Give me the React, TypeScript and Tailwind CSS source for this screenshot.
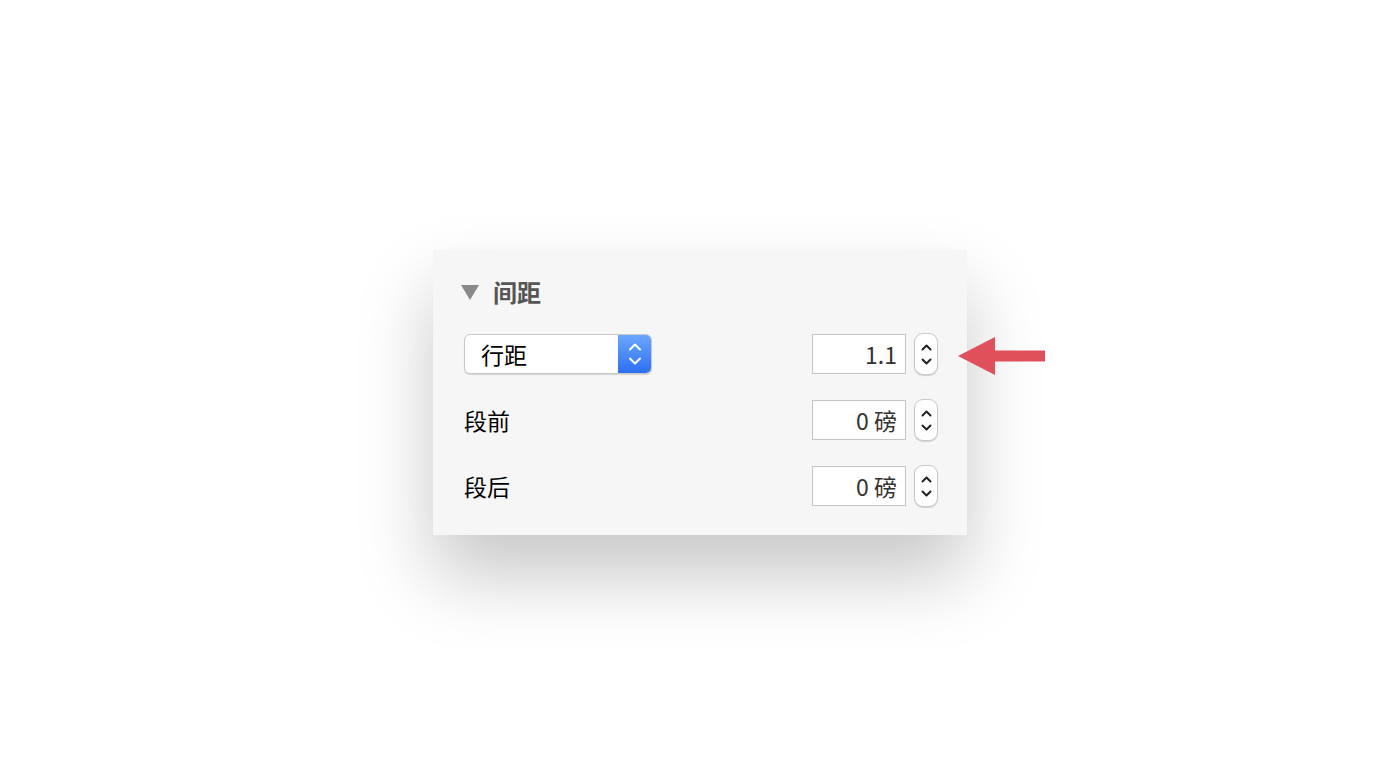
import React from "react";

const font = { fontFamily: '"Noto Sans CJK SC", "Noto Sans", sans-serif' };

function Stepper() {
  return (
    <div className="w-[24px] h-[42px] rounded-[9px] bg-white border border-[#c8c8c8] shadow-[0_1px_1px_rgba(0,0,0,0.15)] flex flex-col items-center justify-center gap-[7px]">
      <svg width="11" height="7" viewBox="0 0 11 7" fill="none" stroke="#222" strokeWidth="2" strokeLinecap="round" strokeLinejoin="round">
        <path d="M1.5 5.5 L5.5 1.5 L9.5 5.5" />
      </svg>
      <svg width="11" height="7" viewBox="0 0 11 7" fill="none" stroke="#222" strokeWidth="2" strokeLinecap="round" strokeLinejoin="round">
        <path d="M1.5 1.5 L5.5 5.5 L9.5 1.5" />
      </svg>
    </div>
  );
}

function NumberField({ value }: { value: string }) {
  return (
    <div className="flex items-center gap-[8px]">
      <div className="w-[94px] h-[40px] bg-white border border-[#c4c4c4] flex items-center justify-end pr-[8px] text-[23px] text-[#333] leading-none">
        {value}
      </div>
      <Stepper />
    </div>
  );
}

export default function App() {
  return (
    <div className="w-[1400px] h-[784px] bg-white flex items-start justify-center pt-[250px]" style={font}>
      <div className="relative">
        <div className="w-[534px] h-[285px] bg-[#f6f6f6] shadow-[0_40px_70px_rgba(0,0,0,0.22)] pl-[31px] pr-[29px] pt-[28px]">
          <div className="flex items-center h-[28px]">
            <svg width="18" height="15" viewBox="0 0 18 15" className="ml-[-3px]">
              <path d="M0 0 H18 L9 15 Z" fill="#8a8a8a" />
            </svg>
            <span className="ml-[14px] text-[24px] font-bold text-[#555] leading-none">间距</span>
          </div>

          <div className="flex items-center justify-between mt-[27px]">
            <div className="w-[188px] h-[40px] rounded-[6px] bg-white border border-[#c8c8c8] shadow-[0_1px_1px_rgba(0,0,0,0.15)] flex overflow-hidden">
              <div className="flex-1 flex items-center pl-[16px] text-[23px] text-black leading-none">行距</div>
              <div className="w-[33px] h-full bg-gradient-to-b from-[#6aa6ff] to-[#2d6ff0] flex flex-col items-center justify-center gap-[6px]">
                <svg width="14" height="8" viewBox="0 0 14 8" fill="none" stroke="white" strokeWidth="2" strokeLinecap="round" strokeLinejoin="round">
                  <path d="M2 6.5 L7 1.5 L12 6.5" />
                </svg>
                <svg width="14" height="8" viewBox="0 0 14 8" fill="none" stroke="white" strokeWidth="2" strokeLinecap="round" strokeLinejoin="round">
                  <path d="M2 1.5 L7 6.5 L12 1.5" />
                </svg>
              </div>
            </div>
            <NumberField value="1.1" />
          </div>

          <div className="flex items-center justify-between mt-[24px]">
            <span className="text-[23px] text-black leading-none">段前</span>
            <NumberField value="0 磅" />
          </div>

          <div className="flex items-center justify-between mt-[24px]">
            <span className="text-[23px] text-black leading-none">段后</span>
            <NumberField value="0 磅" />
          </div>
        </div>

        <svg width="90" height="40" viewBox="0 0 90 40" className="absolute left-[525px] top-[86px]">
          <path d="M0 20 L37 1 L37 14.5 L87 14.5 L87 25.5 L37 25.5 L37 39 Z" fill="#e0505a" />
        </svg>
      </div>
    </div>
  );
}
